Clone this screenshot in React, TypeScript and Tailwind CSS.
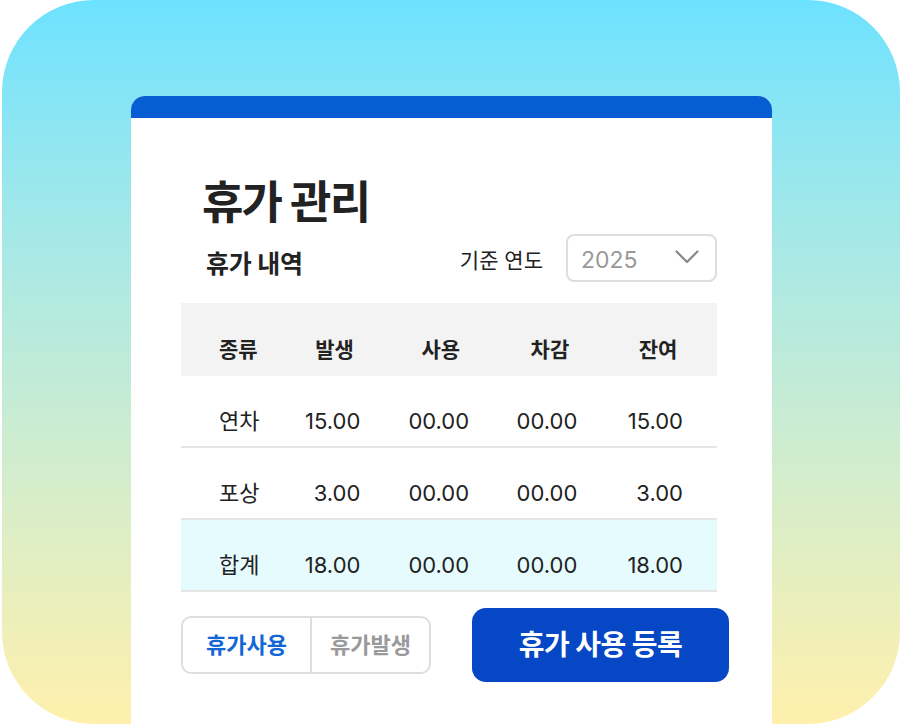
const ROWS = [
  { kind: '연차', gen: '15.00', used: '00.00', ded: '00.00', left: '15.00' },
  { kind: '포상', gen: '3.00', used: '00.00', ded: '00.00', left: '3.00' },
];

const TOTAL = { kind: '합계', gen: '18.00', used: '00.00', ded: '00.00', left: '18.00' };

function Row({ r, total }: { r: typeof TOTAL; total?: boolean }) {
  return (
    <div
      className={`grid grid-cols-5 h-[72px] pt-[21px] items-center border-b-2 border-[#e6e6e6] text-[22px] text-[#222] ${
        total ? 'bg-[#e6fbfe]' : ''
      }`}
    >
      <div className="pl-[38px]">{r.kind}</div>
      <div className="text-right pr-[35px]">{r.gen}</div>
      <div className="pl-[13px]">{r.used}</div>
      <div className="pl-[14px]">{r.ded}</div>
      <div className="text-right pr-[34px]">{r.left}</div>
    </div>
  );
}

export default function App() {
  return (
    <div className="w-[901px] h-[724px] bg-white font-[Inter,'Noto_Sans_CJK_KR',sans-serif]">
      <div className="ml-[2px] w-[898px] h-[724px] rounded-[92px] bg-gradient-to-b from-[#6ce2ff] to-[#fff0ac] pt-[96px] pl-[129px] overflow-hidden">
        <div className="w-[641px] h-[628px] bg-white rounded-t-[14px] overflow-hidden">
          <div className="h-[22px] bg-[#075ed3]" />

          <div className="pl-[50px] pr-[55px]">
            <h1 className="mt-[63px] ml-[21px] h-[44px] leading-[44px] text-[45px] font-bold tracking-[-0.04em] text-[#222]">
              휴가 관리
            </h1>

            <div className="mt-[9px] flex items-center h-[48px]">
              <div className="pl-[25px] pt-[14px] text-[25px] font-bold tracking-[-0.01em] text-[#222]">휴가 내역</div>
              <div className="ml-auto pt-[6px] text-[21px] text-[#222]">기준 연도</div>
              <div className="ml-[23px] w-[151px] h-[48px] border-2 border-[#dedede] rounded-[8px] flex items-center pl-[13px] pr-[16px] pt-[4px]">
                <span className="text-[23px] text-[#999]">2025</span>
                <svg className="ml-auto -mt-[6px]" width="24" height="14" viewBox="0 0 24 14" fill="none">
                  <polyline points="1.5,1.5 12,12 22.5,1.5" stroke="#888" strokeWidth="2.2" strokeLinecap="round" strokeLinejoin="round" />
                </svg>
              </div>
            </div>

            <div className="mt-[21px]">
              <div className="grid grid-cols-5 h-[73px] pt-[21px] items-center bg-[#f3f3f3] text-[21px] font-semibold text-[#222]">
                <div className="pl-[38px]">종류</div>
                <div className="pl-[27px]">발생</div>
                <div className="pl-[26px]">사용</div>
                <div className="pl-[28px]">차감</div>
                <div className="pl-[29px]">잔여</div>
              </div>
              {ROWS.map((r) => (
                <Row key={r.kind} r={r} />
              ))}
              <Row r={TOTAL} total />
            </div>

            <div className="mt-[16px] flex items-center">
              <div className="shrink-0 flex w-[250px] h-[58px] border-2 border-[#dedede] rounded-[10px] text-[22px] font-bold">
                <button className="w-[129px] border-r-2 border-[#dedede] text-[#1366d6]">휴가사용</button>
                <button className="flex-1 text-[#9a9a9a]">휴가발생</button>
              </div>
              <button className="shrink-0 ml-[41px] w-[257px] h-[74px] rounded-[14px] bg-[#0647c5] text-white text-[28px] font-bold tracking-[-0.02em]">
                휴가 사용 등록
              </button>
            </div>
          </div>
        </div>
      </div>
    </div>
  );
}
